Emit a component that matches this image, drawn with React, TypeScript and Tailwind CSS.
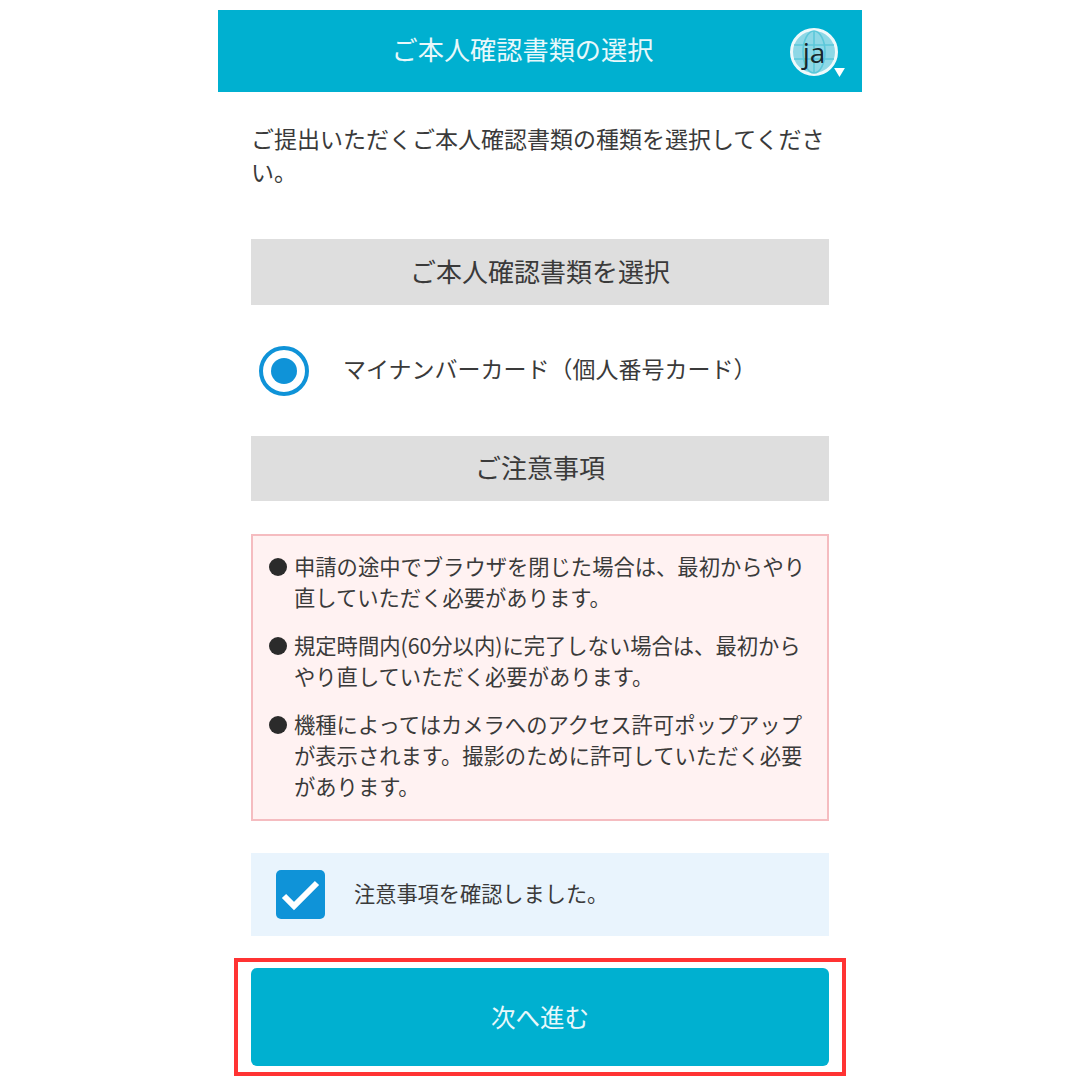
const font = { fontFamily: '"Noto Sans CJK JP", "Noto Sans", sans-serif' };

const notes = [
  ["申請の途中でブラウザを閉じた場合は、最初からやり", "直していただく必要があります。"],
  ["規定時間内(60分以内)に完了しない場合は、最初から", "やり直していただく必要があります。"],
  ["機種によってはカメラへのアクセス許可ポップアップ", "が表示されます。撮影のために許可していただく必要", "があります。"],
];

const LanguageBadge = () => (
  <div className="relative w-[50px] h-[50px]">
    <svg viewBox="0 0 50 50" className="w-[50px] h-[50px]">
      <circle cx="25" cy="25" r="22.5" fill="#8ed8e6" stroke="#eef9fb" strokeWidth="3" />
      <g fill="none" stroke="#5cc8da" strokeWidth="1.6">
        <ellipse cx="25" cy="25" rx="11" ry="21" />
        <path d="M5 18h40M5 32h40M25 4v42" />
      </g>
    </svg>
    <span className="absolute inset-0 flex items-center justify-center text-[28px] leading-none text-[#16262b] font-['Open_Sans']">
      ja
    </span>
    <svg viewBox="0 0 12 10" className="absolute left-[45px] top-[41px] w-[11px] h-[9px]">
      <path d="M0 0h12L6 10z" fill="#fff" />
    </svg>
  </div>
);

const SectionHeading = ({ height, children }: { height: string; children: string }) => (
  <div className={`${height} bg-[#dedede] flex items-center justify-center pb-[4px] text-[26px] text-[#3a3a3a]`}>
    {children}
  </div>
);

export default function App() {
  return (
    <div className="w-[1080px] h-[1080px] bg-white flex justify-center overflow-hidden" style={font}>
      <div className="w-[644px] pt-[10px]">
        {/* Header */}
        <header className="relative h-[82px] bg-[#00b0d0] flex items-center justify-center pr-[35px] pb-[3px] text-[26.2px] text-[#e8f8fb]">
          ご本人確認書類の選択
          <div className="absolute left-[571px] top-[17px]">
            <LanguageBadge />
          </div>
        </header>

        <main className="px-[33px]">
          <p className="mt-[30px] text-[23px] leading-[33px] text-[#3a3a3a]">
            ご提出いただくご本人確認書類の種類を選択してください。
          </p>

          <div className="mt-[51px]">
            <SectionHeading height="h-[66px]">ご本人確認書類を選択</SectionHeading>
          </div>

          <div className="h-[131px] flex items-center pl-[8px]">
            <div className="w-[50px] h-[50px] rounded-full border-[4px] border-[#0f93d8] flex items-center justify-center">
              <div className="w-[26px] h-[26px] rounded-full bg-[#0f93d8]" />
            </div>
            <span className="ml-[34px] pb-[4px] text-[23px] text-[#3a3a3a]">マイナンバーカード（個人番号カード）</span>
          </div>

          <SectionHeading height="h-[65px]">ご注意事項</SectionHeading>

          {/* Notes */}
          <div className="mt-[33px] h-[287px] bg-[#fff2f2] border-2 border-[#f5bcc0] pl-[16px] pt-[14px] flex flex-col gap-[17px]">
            {notes.map((lines, i) => (
              <div key={i} className="flex text-[21.3px] leading-[31px] text-[#3a3a3a]">
                <div className="w-[18px] h-[18px] mt-[8px] mr-[7px] rounded-full bg-[#2b2b2b] shrink-0" />
                <div className="whitespace-nowrap">
                  {lines.map((line) => (
                    <div key={line}>{line}</div>
                  ))}
                </div>
              </div>
            ))}
          </div>

          {/* Confirmation */}
          <div className="mt-[32px] h-[83px] bg-[#e9f4fd] flex items-center pl-[25px]">
            <div className="w-[49px] h-[49px] rounded-[5px] bg-[#0f93d8] flex items-center justify-center">
              <svg viewBox="0 0 49 49" className="w-[49px] h-[49px]">
                <path d="M8 26l10 10L41 13" fill="none" stroke="#fff" strokeWidth="6" />
              </svg>
            </div>
            <span className="ml-[29px] pb-[4px] text-[21.2px] text-[#3a3a3a]">注意事項を確認しました。</span>
          </div>

          {/* Highlighted button */}
          <div className="mt-[22px] mx-[-17px] h-[118px] border-[4px] border-[#ff3333] px-[13px] py-[6px]">
            <button className="w-full h-full rounded-[6px] bg-[#00b0d0] text-[24.5px] text-[#e8f8fb]">
              次へ進む
            </button>
          </div>
        </main>
      </div>
    </div>
  );
}
